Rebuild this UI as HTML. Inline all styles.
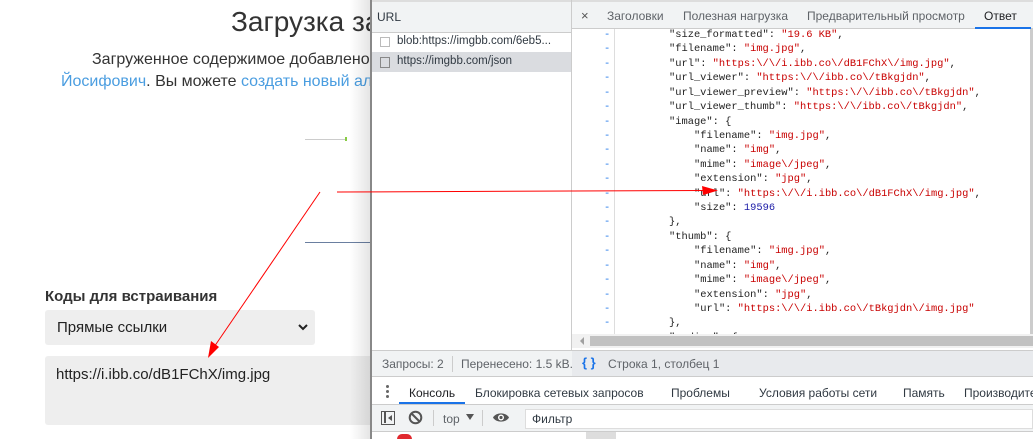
<!DOCTYPE html>
<html><head><meta charset="utf-8"><style>
*{margin:0;padding:0;box-sizing:border-box}
html,body{width:1033px;height:439px;overflow:hidden}
body{position:relative;background:#fff;font-family:"Liberation Sans","DejaVu Sans",sans-serif}
.a{position:absolute;white-space:nowrap}
.ui{font-size:12px;color:#303942}
.code{font-family:"Liberation Mono",monospace;font-size:10.4px;color:#222}
.k{color:#222}.s{color:#c80000}.n{color:#1a1aa6}
.dash{position:absolute;left:604px;color:#1a73e8;font-family:"Liberation Mono",monospace;font-size:10.4px;z-index:6}
</style></head><body>
<div class="a" style="left:231px;top:6px;font-size:28px;color:#333">Загрузка завершена</div>
<div class="a" style="left:92px;top:51px;font-size:16px;color:#333">Загруженное содержимое добавлено</div>
<div class="a" style="left:61px;top:73px;font-size:16px;color:#333"><span style="color:#4a9de0">Йосифович</span>. Вы можете <span style="color:#4a9de0">создать новый альбом</span></div>
<div class="a" style="left:305px;top:139px;width:40px;height:1px;background:#ccc"></div>
<div class="a" style="left:345px;top:137px;width:2px;height:4px;background:#8c4"></div>
<div class="a" style="left:305px;top:242px;width:65px;height:1px;background:#6a7fa0"></div>
<div class="a" style="left:45px;top:288px;font-size:15px;font-weight:bold;color:#333">Коды для встраивания</div>
<div class="a" style="left:45px;top:310px;width:270px;height:35px;background:#eee;border-radius:3px"></div>
<div class="a" style="left:57px;top:319px;font-size:15px;color:#222">Прямые ссылки</div>
<svg class="a" style="left:298px;top:322px" width="10" height="10"><path d="M1 3l4 4 4-4" stroke="#222" stroke-width="2" fill="none"/></svg>
<div class="a" style="left:45px;top:356px;width:340px;height:69px;background:#eee;border-radius:3px"></div>
<div class="a" style="left:56px;top:366px;font-size:15px;color:#222">https://i.ibb.co/dB1FChX/img.jpg</div>
<div class="a" style="left:350px;top:0;width:20px;height:439px;background:linear-gradient(to right,rgba(0,0,0,0),rgba(0,0,0,0.1))"></div>
<div class="a" style="left:370px;top:0;width:663px;height:439px;background:#fff;border-left:2px solid #888"></div>
<div class="a" style="left:372px;top:0;width:200px;height:33px;background:#f1f3f4;border-bottom:1px solid #ccc;border-top:2px solid #ddd"></div>
<div class="a ui" style="left:377px;top:10px">URL</div>
<div class="a" style="left:571px;top:0;width:1px;height:377px;background:#ccc"></div>
<div class="a" style="left:372px;top:52px;width:199px;height:20px;background:#dadce0"></div>
<div class="a" style="left:380px;top:37px;width:10px;height:10px;border:1px solid #bbb"></div>
<div class="a ui" style="left:397px;top:35px;font-size:11.5px">blob:https://imgbb.com/6eb5...</div>
<div class="a" style="left:380px;top:57px;width:10px;height:11px;border:1px solid #888"></div>
<div class="a ui" style="left:397px;top:55px;font-size:11.5px">https://imgbb.com/json</div>
<div id="code"></div>
<div class="a" style="left:572px;top:0;width:461px;height:29px;background:#f1f3f4;border-bottom:1px solid #ccc;border-top:2px solid #ddd;z-index:7"></div>
<div class="a ui" style="left:581px;top:8px;font-size:13px;color:#555;z-index:8">×</div>
<div class="a ui" style="left:607px;top:9px;color:#5f6368;z-index:8">Заголовки</div>
<div class="a ui" style="left:683px;top:9px;color:#5f6368;z-index:8">Полезная нагрузка</div>
<div class="a ui" style="left:807px;top:9px;color:#5f6368;z-index:8">Предварительный просмотр</div>
<div class="a ui" style="left:984px;top:9px;color:#202124;z-index:8">Ответ</div>
<div class="a" style="left:975px;top:27px;width:56px;height:2px;background:#1a73e8;z-index:8"></div>
<div class="a" style="left:614px;top:29px;width:1px;height:305px;background:#ddd"></div>
<div class="a" style="left:1030px;top:29px;width:3px;height:305px;background:#ccc"></div>
<div class="a" style="left:572px;top:334px;width:461px;height:14px;background:#f1f1f1;z-index:7"></div>
<div class="a" style="left:590px;top:336px;width:443px;height:10px;background:#c1c1c1;z-index:7"></div>
<svg class="a" style="left:579px;top:337px;z-index:7" width="6" height="8"><path d="M5 0L1 4l4 4z" fill="#a0a0a0"/></svg>
<div class="a" style="left:372px;top:350px;width:661px;height:27px;background:#f1f3f4;border-top:1px solid #ccc;border-bottom:1px solid #ccc;z-index:7"></div>
<div class="a" style="left:572px;top:351px;width:461px;height:25px;background:#e8eaed;z-index:7"></div>
<div class="a ui" style="left:382px;top:357px;color:#5f6368;z-index:8">Запросы: 2</div>
<div class="a" style="left:452px;top:356px;width:1px;height:16px;background:#ccc;z-index:8"></div>
<div class="a ui" style="left:461px;top:357px;color:#5f6368;z-index:8">Перенесено: 1.5 kB.</div>
<div class="a ui" style="left:582px;top:355px;color:#1a73e8;font-weight:bold;font-size:13px;z-index:8">{ }</div>
<div class="a ui" style="left:608px;top:357px;color:#5f6368;z-index:8">Строка 1, столбец 1</div>
<div class="a" style="left:372px;top:377px;width:661px;height:28px;background:#fff;border-bottom:1px solid #ccc"></div>
<div class="a" style="left:386px;top:385px;width:3px;height:3px;background:#666;border-radius:2px;box-shadow:0 5px 0 #666,0 10px 0 #666"></div>
<div class="a ui" style="left:409px;top:386px;color:#202124">Консоль</div>
<div class="a" style="left:399px;top:402px;width:66px;height:2px;background:#1a73e8"></div>
<div class="a ui" style="left:475px;top:386px">Блокировка сетевых запросов</div>
<div class="a ui" style="left:671px;top:386px">Проблемы</div>
<div class="a ui" style="left:759px;top:386px">Условия работы сети</div>
<div class="a ui" style="left:903px;top:386px">Память</div>
<div class="a ui" style="left:964px;top:386px">Производительность</div>
<div class="a" style="left:372px;top:405px;width:661px;height:27px;background:#f1f3f4;border-bottom:1px solid #ccc"></div>
<div class="a" style="left:381px;top:411px;width:14px;height:14px;border:1.5px solid #555"></div>
<div class="a" style="left:384px;top:412px;width:1.5px;height:11px;background:#555"></div>
<svg class="a" style="left:388px;top:415px" width="5" height="6"><path d="M4 0L0 3l4 3z" fill="#555"/></svg>
<svg class="a" style="left:408px;top:410px" width="15" height="15"><circle cx="7.5" cy="7.5" r="5.8" stroke="#555" stroke-width="2" fill="none"/><path d="M3.5 3.5l8 8" stroke="#555" stroke-width="2"/></svg>
<div class="a" style="left:433px;top:410px;width:1px;height:16px;background:#ccc"></div>
<div class="a ui" style="left:443px;top:412px;color:#5f6368">top</div>
<svg class="a" style="left:466px;top:414px" width="8" height="7"><path d="M0 0h8L4 6z" fill="#555"/></svg>
<div class="a" style="left:482px;top:410px;width:1px;height:16px;background:#ccc"></div>
<svg class="a" style="left:492px;top:411px" width="18" height="13"><path d="M1 6.5C4 1 14 1 17 6.5 14 12 4 12 1 6.5z" fill="#555"/><circle cx="9" cy="6.5" r="3" fill="#fff"/><circle cx="9" cy="6.5" r="1.6" fill="#555"/></svg>
<div class="a" style="left:525px;top:409px;width:508px;height:20px;background:#fff;border:1px solid #ddd"></div>
<div class="a ui" style="left:532px;top:412px;color:#303942">Фильтр</div>
<div class="a" style="left:372px;top:432px;width:661px;height:7px;background:#fff"></div>
<div class="a" style="left:397px;top:434px;width:15px;height:5px;border-radius:8px 8px 0 0;background:#e0282e"></div>
<div class="a" style="left:586px;top:432px;width:30px;height:7px;background:#ddd"></div>
<svg class="a" style="left:0;top:0;z-index:5" width="1033" height="439">
<line x1="320" y1="192" x2="212" y2="350" stroke="#f00" stroke-width="1"/>
<path d="M208 358L211 341L219 347z" fill="#f00"/>
<line x1="337" y1="192" x2="705" y2="190.5" stroke="#f00" stroke-width="1"/>
<path d="M718 190.5L702 186L703 195z" fill="#f00"/>
</svg>
<script>
var L=[
[0,'<span class="k">"size_formatted"</span>: <span class="s">"19.6 KB"</span>,'],
[0,'<span class="k">"filename"</span>: <span class="s">"img.jpg"</span>,'],
[0,'<span class="k">"url"</span>: <span class="s">"https:\\/\\/i.ibb.co\\/dB1FChX\\/img.jpg"</span>,'],
[0,'<span class="k">"url_viewer"</span>: <span class="s">"https:\\/\\/ibb.co\\/tBkgjdn"</span>,'],
[0,'<span class="k">"url_viewer_preview"</span>: <span class="s">"https:\\/\\/ibb.co\\/tBkgjdn"</span>,'],
[0,'<span class="k">"url_viewer_thumb"</span>: <span class="s">"https:\\/\\/ibb.co\\/tBkgjdn"</span>,'],
[0,'"image": {'],
[1,'"filename": <span class="s">"img.jpg"</span>,'],
[1,'"name": <span class="s">"img"</span>,'],
[1,'"mime": <span class="s">"image\\/jpeg"</span>,'],
[1,'"extension": <span class="s">"jpg"</span>,'],
[1,'"url": <span class="s">"https:\\/\\/i.ibb.co\\/dB1FChX\\/img.jpg"</span>,'],
[1,'"size": <span class="n">19596</span>'],
[0,'},'],
[0,'"thumb": {'],
[1,'"filename": <span class="s">"img.jpg"</span>,'],
[1,'"name": <span class="s">"img"</span>,'],
[1,'"mime": <span class="s">"image\\/jpeg"</span>,'],
[1,'"extension": <span class="s">"jpg"</span>,'],
[1,'"url": <span class="s">"https:\\/\\/i.ibb.co\\/tBkgjdn\\/img.jpg"</span>'],
[0,'},'],
[0,'"medium": {']];
var h='';
for(var i=0;i<L.length;i++){var y=29+i*14.42;
h+='<div class="dash" style="top:'+y+'px">-</div><div class="a code" style="left:'+(669+L[i][0]*25)+'px;top:'+y+'px">'+L[i][1]+'</div>';}
document.getElementById('code').innerHTML=h;
</script>
</body></html>
